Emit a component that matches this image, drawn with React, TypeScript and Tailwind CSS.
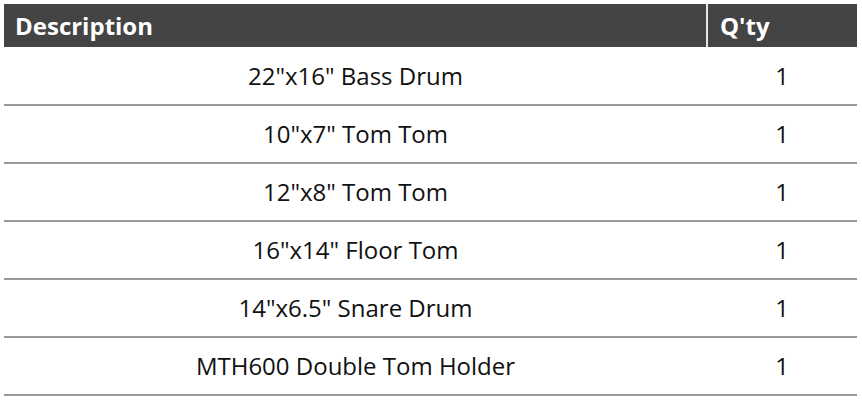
import React from 'react';

const items = [
  { name: '22"x16" Bass Drum', qty: 1 },
  { name: '10"x7" Tom Tom', qty: 1 },
  { name: '12"x8" Tom Tom', qty: 1 },
  { name: '16"x14" Floor Tom', qty: 1 },
  { name: '14"x6.5" Snare Drum', qty: 1 },
  { name: 'MTH600 Double Tom Holder', qty: 1 },
];

const App: React.FC = () => {
  return (
    <div className="bg-white p-1 font-['Open_Sans',sans-serif] text-[#111]">
      <table className="w-[853px] border-collapse">
        <thead>
          <tr className="bg-[#444444] text-white h-[43px]">
            <th className="text-left font-bold text-[24px] leading-none pl-[11px] border-r-2 border-[#e5e5e5] w-[703px]">
              Description
            </th>
            <th className="text-left font-bold text-[24px] leading-none pl-[12px]">Q'ty</th>
          </tr>
        </thead>
        <tbody>
          {items.map((item) => (
            <tr key={item.name} className="h-[58px] border-b-2 border-[#999999] text-[24px] leading-none">
              <td className="text-center">{item.name}</td>
              <td className="text-center">{item.qty}</td>
            </tr>
          ))}
        </tbody>
      </table>
    </div>
  );
};

export default App;
